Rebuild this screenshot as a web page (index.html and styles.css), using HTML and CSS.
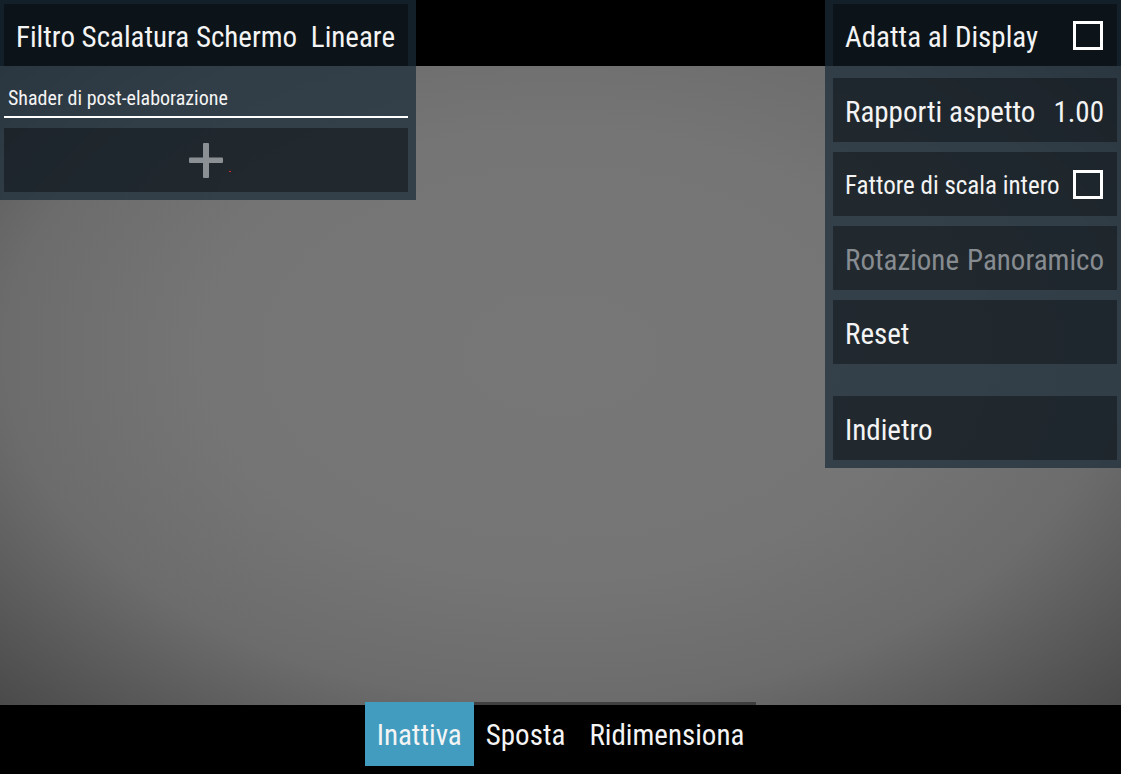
FILE: index.html
```html
<!DOCTYPE html>
<html lang="it">
<head>
    <meta charset="UTF-8">
    <meta name="viewport" content="width=device-width, initial-scale=1.0">
    <title>Layout schermo</title>
    <link rel="stylesheet" href="styles.css">
</head>
<body>
    <div class="screen">
        <div class="topbar"></div>
        <div class="viewport"></div>
        <div class="bottombar">
            <div class="modes">
                <div class="mode active">Inattiva</div>
                <div class="mode">Sposta</div>
                <div class="mode">Ridimensiona</div>
            </div>
        </div>

        <div class="panel panel-left">
            <div class="row row-first">
                <span>Filtro Scalatura Schermo</span>
                <span>Lineare</span>
            </div>
            <div class="section-label">Shader di post-elaborazione</div>
            <div class="row row-add">
                <svg class="plus" width="34" height="35" viewBox="0 0 34 35">
                    <rect x="0" y="14.5" width="34" height="5.5" rx="1" />
                    <rect x="14" y="0" width="6" height="35" rx="1" />
                </svg>
                <span class="speck"></span>
            </div>
        </div>

        <div class="panel panel-right">
            <div class="row row-first">
                <span>Adatta al Display</span>
                <span class="checkbox"></span>
            </div>
            <div class="row">
                <span>Rapporti aspetto</span>
                <span>1.00</span>
            </div>
            <div class="row row-small">
                <span>Fattore di scala intero</span>
                <span class="checkbox"></span>
            </div>
            <div class="row disabled">
                <span>Rotazione</span>
                <span>Panoramico</span>
            </div>
            <div class="row">
                <span>Reset</span>
            </div>
            <div class="spacer"></div>
            <div class="row">
                <span>Indietro</span>
            </div>
        </div>
    </div>
</body>
</html>
```

FILE: styles.css
```css
html, body {
    margin: 0;
    padding: 0;
    background: #000;
}
body {
    font-family: "Roboto Condensed", "Liberation Sans Narrow", "DejaVu Sans Condensed", Roboto, sans-serif;
    font-stretch: condensed;
    color: #f4f4f4;
}
.screen {
    position: relative;
    width: 1121px;
    height: 774px;
    overflow: hidden;
    display: flex;
    flex-direction: column;
}
.topbar {
    height: 66px;
    background: #000;
}
.viewport {
    height: 639px;
    background: radial-gradient(ellipse farthest-corner at 50% 45%, #777 0%, #757575 45%, #6c6c6c 70%, #4a4a4a 100%);
}
.bottombar {
    flex: 1;
    background: #000;
    display: flex;
    justify-content: center;
}
.modes {
    display: flex;
    height: 64px;
    margin-top: -3px;
    background: rgba(0, 0, 0, 0.4);
}
.mode {
    padding: 2px 12px 0;
    font-size: 29px;
    line-height: 62px;
}
.mode.active {
    background: #419cbf;
}

/* floating panels */
.panel {
    position: absolute;
    top: 0;
    background: rgba(26, 43, 57, 0.72);
    display: flex;
    flex-direction: column;
}
.panel-left {
    left: 0;
    width: 404px;
    padding: 4px 8px 8px 4px;
}
.panel-right {
    right: 0;
    width: 284px;
    padding: 4px 4px 8px 8px;
    gap: 10px;
}
.row {
    height: 64px;
    box-sizing: border-box;
    display: flex;
    align-items: center;
    justify-content: space-between;
    padding: 3px 13px 0 12px;
    background: rgba(0, 0, 0, 0.35);
    font-size: 29px;
    white-space: nowrap;
}
.row-first {
    height: 62px;
}
.panel-right .row-first {
    margin-bottom: 2px;
}
.row-small {
    font-size: 25px;
    padding-right: 14px;
}
.disabled {
    color: #878c91;
}
.spacer {
    height: 12px;
}
.checkbox {
    width: 24px;
    height: 23px;
    border: 3px solid #fff;
    flex: none;
    margin-top: -3px;
}
.panel-right .row-first .checkbox {
    margin-right: 1px;
}
.section-label {
    height: 52px;
    box-sizing: border-box;
    padding: 21px 0 0 4px;
    font-size: 20px;
    line-height: 22px;
    border-bottom: 2px solid #fff;
    margin-bottom: 10px;
}
.row-add {
    justify-content: center;
    position: relative;
    padding-top: 0;
}
.plus {
    fill: #8b9095;
    filter: blur(0.4px);
}
.speck {
    position: absolute;
    left: 225px;
    top: 43px;
    width: 2px;
    height: 1px;
    background: #e0262a;
}
```
